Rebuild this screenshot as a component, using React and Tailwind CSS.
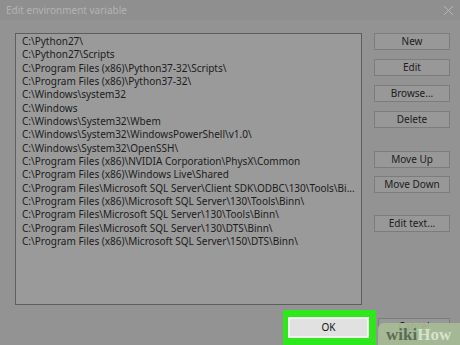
import React from 'react';

const paths = [
  'C:\\Python27\\',
  'C:\\Python27\\Scripts',
  'C:\\Program Files (x86)\\Python37-32\\Scripts\\',
  'C:\\Program Files (x86)\\Python37-32\\',
  'C:\\Windows\\system32',
  'C:\\Windows',
  'C:\\Windows\\System32\\Wbem',
  'C:\\Windows\\System32\\WindowsPowerShell\\v1.0\\',
  'C:\\Windows\\System32\\OpenSSH\\',
  'C:\\Program Files (x86)\\NVIDIA Corporation\\PhysX\\Common',
  'C:\\Program Files (x86)\\Windows Live\\Shared',
  'C:\\Program Files\\Microsoft SQL Server\\Client SDK\\ODBC\\130\\Tools\\Bi...',
  'C:\\Program Files (x86)\\Microsoft SQL Server\\130\\Tools\\Binn\\',
  'C:\\Program Files\\Microsoft SQL Server\\130\\Tools\\Binn\\',
  'C:\\Program Files\\Microsoft SQL Server\\130\\DTS\\Binn\\',
  'C:\\Program Files (x86)\\Microsoft SQL Server\\150\\DTS\\Binn\\',
];

const SideButton = ({ label, className = '' }) => (
  <div
    className={`h-[17px] w-[76px] border border-[#7c7c7c] bg-[#989898] flex items-center justify-center text-[10px] text-[#1c1c1c] ${className}`}
  >
    {label}
  </div>
);

const App = () => {
  return (
    <div
      className="relative w-[460px] h-[345px] overflow-hidden bg-[#939393]"
      style={{ fontFamily: '"Noto Sans", "Open Sans", sans-serif' }}
    >
      {/* Title bar */}
      <div className="h-[20px] bg-[#8f8f8f] flex items-center justify-between pl-[6px] pr-[5px]">
        <span className="text-[10px] text-[#b3b3b3]">Edit environment variable</span>
        <svg width="11" height="11" viewBox="0 0 11 11" className="mr-[1px]">
          <path d="M1 1 L10 10 M10 1 L1 10" stroke="#b8b8b8" strokeWidth="1" fill="none" />
        </svg>
      </div>

      {/* Content */}
      <div className="flex pt-[13px] pl-[15px]">
        <div className="w-[347px] h-[272px] border border-[#5e5e5e] bg-[#9a9a9a] pt-[1px] pl-[6px] overflow-hidden">
          {paths.map((p) => (
            <div key={p} className="h-[13.33px] leading-[13.33px] text-[10px] text-[#1c1c1c] whitespace-nowrap">
              {p}
            </div>
          ))}
        </div>
        <div className="ml-[12px] flex flex-col">
          <SideButton label="New" />
          <SideButton label="Edit" className="mt-[9px]" />
          <SideButton label="Browse..." className="mt-[9px]" />
          <SideButton label="Delete" className="mt-[9px]" />
          <SideButton label="Move Up" className="mt-[23px]" />
          <SideButton label="Move Down" className="mt-[8px]" />
          <SideButton label="Edit text..." className="mt-[22px]" />
        </div>
      </div>

      {/* Footer buttons */}
      <div className="flex mt-[5px] pl-[283px]">
        <div className="w-[93px] h-[40px] bg-[#2ee81c] pl-[5px] pt-[7px]">
          <div className="w-[81px] h-[21px] border-2 border-[#f2f2f2] bg-[#e1e1e1] flex items-center justify-center">
            <span className="text-[10px] text-[#111]">OK</span>
          </div>
        </div>
        <div className="ml-[2px] mt-[8px] w-[72px] h-[20px] border border-[#7c7c7c] bg-[#989898] flex items-start justify-center pt-[1px] text-[10px] leading-[12px] text-[#1c1c1c]">
          Cancel
        </div>
      </div>

      {/* wikiHow watermark */}
      <div className="absolute right-0 bottom-0 w-[82px] h-[22px] rounded-tl-[6px] bg-[#a7bd96]/90 flex items-end pl-[8px] pb-[2px]">
        <span
          className="text-[17px] font-bold leading-none"
          style={{ fontFamily: '"Liberation Serif", serif' }}
        >
          <span className="text-[#5d6b56]">wiki</span>
          <span className="text-[#d6e2cc]">How</span>
        </span>
      </div>
    </div>
  );
};

export default App;
